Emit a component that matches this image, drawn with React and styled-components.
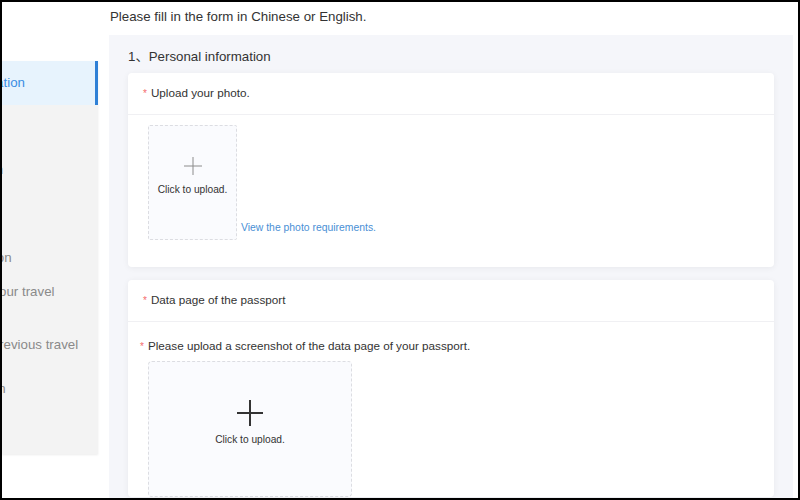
import React from "react";
import styled, { createGlobalStyle } from "styled-components";

const Global = createGlobalStyle`
  html, body { margin: 0; padding: 0; background: #fff; }
  body { font-family: "Liberation Sans", Arial, "Noto Sans CJK SC", sans-serif; }
  * { box-sizing: border-box; }
`;

const Frame = styled.div`
  width: 800px;
  height: 500px;
  border: 2px solid #000;
  overflow: hidden;
  display: flex;
  align-items: flex-start;
  background: #fff;
`;

const Sidebar = styled.nav`
  width: 96px;
  flex-shrink: 0;
  margin-top: 59px;
  overflow: hidden;
  background: #f3f3f3;
  box-shadow: 0 1px 2px rgba(0, 0, 0, 0.08);
`;

const NavList = styled.ul`
  list-style: none;
  margin: 0 0 0 -99px;
  padding: 0;
  width: 195px;
`;

const NavItem = styled.li`
  height: 43.7px;
  display: flex;
  flex-direction: column;
  justify-content: center;
  font-size: 13.3px;
  line-height: 18px;
  white-space: nowrap;
  color: ${(p) => (p.$active ? "#3a8ee3" : "#8a8a8a")};
  background: ${(p) => (p.$active ? "#e7f3fd" : "transparent")};
  border-right: 3px solid ${(p) => (p.$active ? "#2f80d6" : "transparent")};
`;

const Main = styled.main`
  flex: 1;
  margin: 0 5px 0 11px;
  height: 496px;
  display: flex;
  flex-direction: column;
`;

const Header = styled.div`
  padding: 5px 1px 8px;
  font-size: 13.3px;
  line-height: 20px;
  color: #333;
`;

const Panel = styled.section`
  flex: 1;
  background: #f5f6fa;
  padding: 12px 19px 0;
`;

const Title = styled.div`
  font-size: 13.3px;
  line-height: 20px;
  color: #333;
  margin-bottom: 6px;
`;

const Card = styled.div`
  background: #fff;
  border-radius: 4px;
  box-shadow: 0 1px 6px rgba(0, 0, 0, 0.06);
  margin-bottom: 13px;
`;

const CardHeader = styled.div`
  padding: 12px 15px 12px;
  font-size: 11.7px;
  line-height: 16px;
  color: #333;
  border-bottom: 1px solid #f0f0f3;
`;

const Required = styled.span`
  color: #f56c6c;
  font-size: 10px;
  margin-right: 4px;
`;

const PhotoBody = styled.div`
  padding: 10px 20px 27px;
  display: flex;
  align-items: flex-end;
`;

const PassportBody = styled.div`
  padding: 16px 20px 0 12px;
`;

const FieldLabel = styled.div`
  font-size: 11.7px;
  line-height: 16px;
  color: #333;
  margin-bottom: 6px;
`;

const UploadBox = styled.div`
  width: ${(p) => p.$w}px;
  height: ${(p) => p.$h}px;
  padding-top: ${(p) => p.$pt}px;
  margin-left: ${(p) => p.$ml || 0}px;
  border: 1px dashed #dcdde2;
  border-radius: ${(p) => p.$r}px;
  background: #fafbfe;
  display: flex;
  flex-direction: column;
  align-items: center;
  flex-shrink: 0;
`;

const UploadText = styled.div`
  font-size: 10.2px;
  line-height: 14px;
  color: #333;
  margin-top: ${(p) => p.$mt}px;
`;

const Link = styled.a`
  font-size: 10.4px;
  line-height: 14px;
  color: #4a8fd5;
  margin: 0 0 5px 4px;
  text-decoration: none;
  cursor: pointer;
`;

const Plus = ({ size, stroke, width }) => (
  <svg width={size} height={size} viewBox={`0 0 ${size} ${size}`} style={{ display: "block" }}>
    <line x1={size / 2} y1="0" x2={size / 2} y2={size} stroke={stroke} strokeWidth={width} />
    <line x1="0" y1={size / 2} x2={size} y2={size / 2} stroke={stroke} strokeWidth={width} />
  </svg>
);

const navItems = [
  { lines: ["Personal information"], active: true },
  { lines: ["Passport"] },
  { lines: ["Work information"] },
  { lines: ["Education"] },
  { lines: ["Family information"] },
  { lines: ["Information for your travel", "companions"] },
  { lines: ["Details of your previous travel"] },
  { lines: ["Other information"] },
  { lines: ["Declaration"] },
];

export default function App() {
  return (
    <>
      <Global />
      <Frame>
        <Sidebar>
          <NavList>
            {navItems.map((it, i) => (
              <NavItem key={i} $active={it.active}>
                {it.lines.map((l, j) => (
                  <span key={j}>{l}</span>
                ))}
              </NavItem>
            ))}
          </NavList>
        </Sidebar>
        <Main>
          <Header>Please fill in the form in Chinese or English.</Header>
          <Panel>
            <Title>1、Personal information</Title>
            <Card>
              <CardHeader>
                <Required>*</Required>Upload your photo.
              </CardHeader>
              <PhotoBody>
                <UploadBox $w={89} $h={115} $pt={31} $r={2}>
                  <Plus size={18} stroke="#8c8c8c" width={1} />
                  <UploadText $mt={8}>Click to upload.</UploadText>
                </UploadBox>
                <Link>View the photo requirements.</Link>
              </PhotoBody>
            </Card>
            <Card>
              <CardHeader>
                <Required>*</Required>Data page of the passport
              </CardHeader>
              <PassportBody>
                <FieldLabel>
                  <Required>*</Required>Please upload a screenshot of the data page of your passport.
                </FieldLabel>
                <UploadBox $w={204} $h={136} $pt={38} $r={4} $ml={8}>
                  <Plus size={26} stroke="#333" width={2} />
                  <UploadText $mt={7}>Click to upload.</UploadText>
                </UploadBox>
              </PassportBody>
            </Card>
          </Panel>
        </Main>
      </Frame>
    </>
  );
}
